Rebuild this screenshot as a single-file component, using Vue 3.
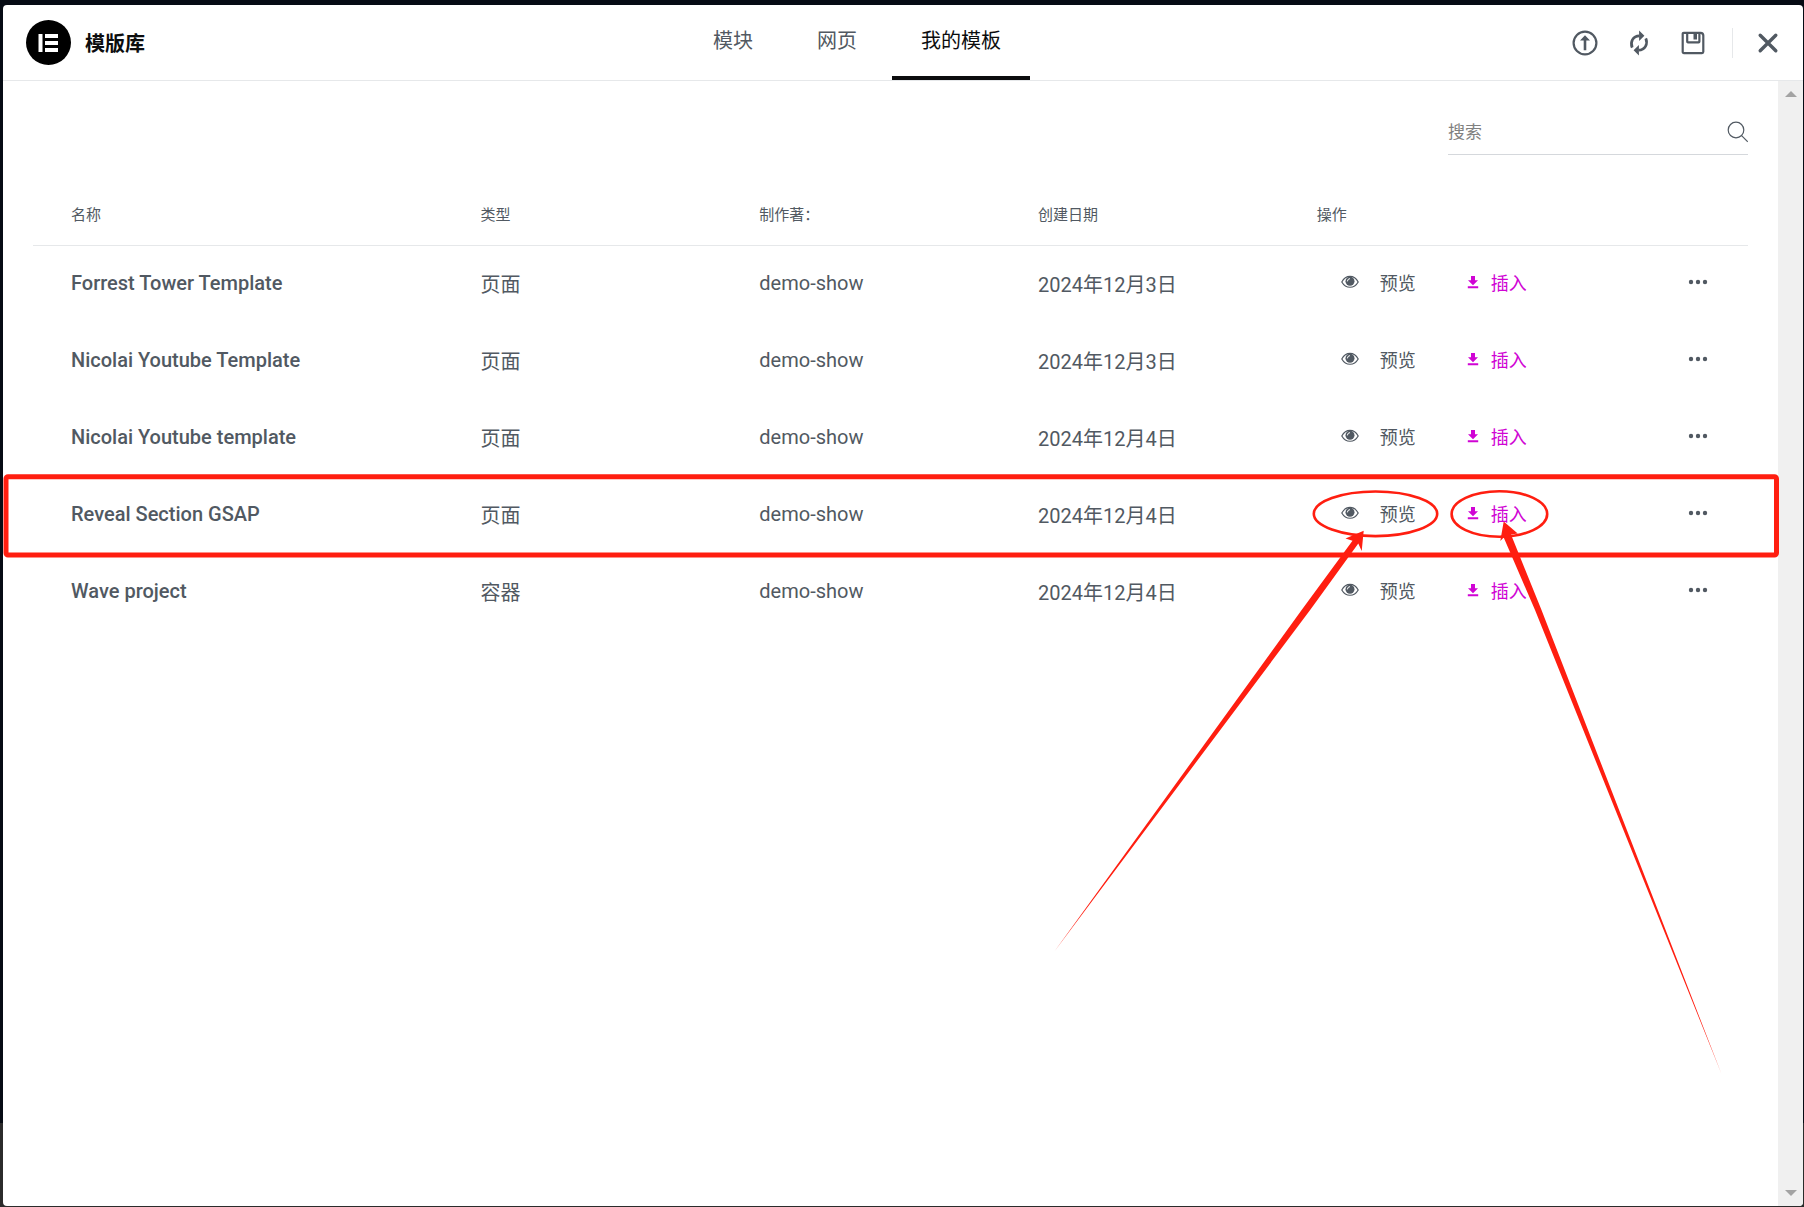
<script setup>
import { ref } from 'vue'

const tabs = ['模块', '网页', '我的模板']
const activeTab = ref('我的模板')
const search = ref('')

const templates = ref([
  { id: 1, title: 'Forrest Tower Template', type: '页面', author: 'demo-show', date: '2024年12月3日' },
  { id: 2, title: 'Nicolai Youtube Template', type: '页面', author: 'demo-show', date: '2024年12月3日' },
  { id: 3, title: 'Nicolai Youtube template', type: '页面', author: 'demo-show', date: '2024年12月4日' },
  { id: 4, title: 'Reveal Section GSAP', type: '页面', author: 'demo-show', date: '2024年12月4日' },
  { id: 5, title: 'Wave project', type: '容器', author: 'demo-show', date: '2024年12月4日' },
])
</script>

<template>
  <div class="backdrop">
    <div class="modal">
      <header class="header">
        <div class="brand">
          <svg class="logo" viewBox="0 0 45 45" aria-hidden="true">
            <circle cx="22.5" cy="22.5" r="22.5" />
            <path fill="#fff" d="M12.5 14h4v18h-4zM19 14h13v4H19zM19 21h13v4H19zM19 28h13v4H19z" />
          </svg>
          <h1>模版库</h1>
        </div>
        <nav class="tabs">
          <button
            v-for="tab in tabs"
            :key="tab"
            type="button"
            class="tab"
            :class="{ active: tab === activeTab }"
            @click="activeTab = tab"
          >
            {{ tab }}
          </button>
        </nav>
        <div class="tools">
          <button type="button" aria-label="导入模板">
            <svg width="26" height="26" viewBox="0 0 26 26">
              <circle cx="13" cy="13" r="11.4" fill="none" stroke="currentColor" stroke-width="2.2" />
              <path fill="currentColor" d="M13 5.2 18 10.4H14.3V20.2H11.7V10.4H8z" />
            </svg>
          </button>
          <button type="button" aria-label="同步模板库">
            <svg width="26" height="26" viewBox="0 0 26 26">
              <g fill="none" stroke="currentColor" stroke-width="2.7">
                <path d="M6.2 17.6C3.8 12 7 6 13.4 5.8" />
                <path d="M19.8 8.4C22.2 14 19 20 12.6 20.2" />
              </g>
              <path fill="currentColor" d="M13.1.5 18.4 5.8 13.1 11zM12.9 15 7.6 20.2 12.9 25.5z" />
            </svg>
          </button>
          <button type="button" aria-label="保存">
            <svg width="26" height="26" viewBox="0 0 26 26">
              <g fill="none" stroke="currentColor" stroke-width="2.2">
                <path d="M3.800 2.800H20.600Q23.300 2.800 23.300 5.600V21.800Q23.300 23.100 22 23.100H4Q2.700 23.100 2.700 21.800V4Q2.700 2.800 3.800 2.800z" />
                <path d="M7.200 3V11.600Q7.200 12.400 8 12.400H18.600Q19.400 12.400 19.400 11.600V3" />
              </g>
              <path fill="currentColor" d="M13.500 3h3.500v6.500h-3.500z" />
            </svg>
          </button>
          <span class="divider"></span>
          <button type="button" aria-label="关闭">
            <svg width="26" height="26" viewBox="0 0 26 26">
              <path
                d="M5.2 5.2 20.8 20.8M20.8 5.2 5.2 20.8"
                stroke="currentColor"
                stroke-width="3.4"
                stroke-linecap="round"
              />
            </svg>
          </button>
        </div>
      </header>

      <div class="body">
        <main class="content">
          <label class="search">
            <input v-model="search" type="text" placeholder="搜索" aria-label="搜索" />
            <svg width="21" height="22" viewBox="0 0 21 22" fill="none" stroke="#515962" stroke-width="1.2">
              <circle cx="9" cy="9" r="7.8" />
              <path d="M14.600 14.600 20.800 20.800" />
            </svg>
          </label>

          <table>
            <colgroup>
              <col class="col-name" />
              <col class="col-info" />
              <col class="col-info" />
              <col class="col-info" />
              <col />
            </colgroup>
            <thead>
              <tr>
                <th>名称</th>
                <th>类型</th>
                <th>制作著：</th>
                <th>创建日期</th>
                <th>操作</th>
              </tr>
            </thead>
            <tbody>
              <tr v-for="item in templates" :key="item.id">
                <td class="name">{{ item.title }}</td>
                <td>{{ item.type }}</td>
                <td>{{ item.author }}</td>
                <td>{{ item.date }}</td>
                <td>
                  <div class="actions">
                    <button type="button" class="preview">
                      <svg width="18" height="14" viewBox="0 0 18 14">
                        <path
                          d="M.8 7C4.8-.4 13.2-.4 17.2 7C13.2 14 4.8 14 .8 7z"
                          fill="none"
                          stroke="currentColor"
                          stroke-width="1.2"
                        />
                        <circle cx="9" cy="6.3" r="4.5" fill="currentColor" />
                        <path d="M6.4 6.4Q6.4 3.8 9 3.6" fill="none" stroke="#fff" stroke-width="1" />
                      </svg>
                      预览
                    </button>
                    <button type="button" class="insert">
                      <svg width="12" height="14" viewBox="0 0 12 14">
                        <path fill="currentColor" d="M4 1h4v4.200h3L6 10.200 1 5.200h3zM.8 11.300h10.400v2H.8z" />
                      </svg>
                      插入
                    </button>
                    <button type="button" class="more" aria-label="更多操作">
                      <svg width="20" height="6" viewBox="0 0 20 6" fill="currentColor">
                        <circle cx="3" cy="3" r="2.200" />
                        <circle cx="10" cy="3" r="2.200" />
                        <circle cx="17" cy="3" r="2.200" />
                      </svg>
                    </button>
                  </div>
                </td>
              </tr>
            </tbody>
          </table>
        </main>

        <div class="scrollbar" aria-hidden="true">
          <svg width="12" height="6" viewBox="0 0 12 6"><path fill="#a3a3a3" d="M0 6 6 0l6 6z" /></svg>
          <svg width="12" height="6" viewBox="0 0 12 6"><path fill="#a3a3a3" d="M0 0h12L6 6z" /></svg>
        </div>
      </div>
    </div>

    <!-- hand-drawn marks pointing at preview and insert -->
    <svg class="marks" width="1804" height="1100" viewBox="0 0 1804 1100" aria-hidden="true">
      <g fill="none" stroke="#ff1e10">
        <rect x="6" y="476.700" width="1770.500" height="78.300" rx="2" stroke-width="5" />
        <ellipse cx="1375.500" cy="513.800" rx="61.700" ry="22.300" stroke-width="2.600" />
        <ellipse cx="1499.400" cy="514" rx="47.800" ry="22.700" stroke-width="2.600" />
      </g>
      <g fill="#ff1e10">
        <path d="M1363.700 530.700 1345.500 538.500 1352.500 540.800 1302 609.500 1054 952 1310.500 609.500 1358.300 543.500 1361.700 551z" />
        <path d="M1503.700 521.500 1500.300 541 1503.700 537.500 1535 610 1721.500 1074 1541.500 610 1511 534.500 1517.700 533.500z" />
      </g>
    </svg>
  </div>
</template>

<style>
body {
  background: #2b2b2b;
}
</style>

<style scoped>
.backdrop {
  position: relative;
  display: flex;
  box-sizing: border-box;
  min-height: 100vh;
  padding: 5px 1px 1px 3px;
  background: linear-gradient(#060b14 93%, #2b2b2b 93%);
  color: #515962;
  font-family: Roboto, 'Noto Sans CJK SC', sans-serif;
}
.modal {
  flex: 1;
  display: flex;
  flex-direction: column;
  overflow: hidden;
  border-radius: 4px;
  background: #fff;
}
button {
  display: flex;
  align-items: center;
  padding: 0;
  border: 0;
  background: none;
  color: inherit;
  font: inherit;
  cursor: pointer;
}
svg {
  display: block;
}
.header {
  display: flex;
  height: 75px;
  border-bottom: 1px solid #e6e8ea;
}
.brand {
  flex: 0 0 calc(50% - 219px);
  display: flex;
  align-items: center;
  gap: 14px;
  box-sizing: border-box;
  padding-left: 23px;
}
.logo {
  width: 45px;
  height: 45px;
}
h1 {
  margin: 0;
  color: #0c0d0e;
  font-size: 20px;
  font-weight: 700;
}
.tabs {
  display: flex;
  gap: 6px;
}
.tab {
  box-sizing: border-box;
  padding: 0 29px 2px;
  border-bottom: 4px solid transparent;
  font-size: 20px;
}
.tab.active {
  border-color: #0c0d0e;
  color: #0c0d0e;
}
.tools {
  flex: 1;
  display: flex;
  align-items: center;
  justify-content: flex-end;
  gap: 28px;
  padding-right: 22px;
}
.divider {
  width: 1px;
  height: 30px;
  margin: 0 -6px 0 -2px;
  background: #e6e8ea;
}
.body {
  flex: 1;
  display: flex;
}
.content {
  flex: 1;
  padding: 30px;
}
.search {
  display: flex;
  align-items: center;
  box-sizing: border-box;
  width: 300px;
  height: 44px;
  margin-left: auto;
  padding-bottom: 2px;
  border-bottom: 1px solid #d5d8dc;
}
.search input {
  flex: 1;
  min-width: 0;
  padding: 0;
  border: 0;
  outline: 0;
  background: none;
  color: #515962;
  font: inherit;
  font-size: 17px;
}
.search input::placeholder {
  color: #818181;
}
table {
  width: 100%;
  margin-top: 30px;
  border-collapse: collapse;
  table-layout: fixed;
}
.col-name {
  width: 26.1%;
}
.col-info {
  width: 16.25%;
}
th,
td {
  padding: 0 0 3px;
  text-align: left;
  font-weight: 400;
}
th:first-child,
td:first-child {
  padding-left: 38px;
}
th {
  height: 57px;
  border-bottom: 1px solid #e6e8ea;
  font-size: 15px;
}
td {
  height: 74px;
  font-size: 20px;
}
td.name {
  font-weight: 500;
}
.actions {
  display: flex;
  align-items: center;
  padding: 0 40px 2px 24px;
  font-size: 18px;
}
.preview {
  gap: 21px;
}
.insert {
  gap: 12px;
  margin-left: 51px;
  color: #d004d4;
}
.more {
  margin-left: auto;
}
.scrollbar {
  display: flex;
  flex-direction: column;
  align-items: center;
  justify-content: space-between;
  width: 25px;
  padding: 10px 0;
  background: #f0f0f0;
}
.marks {
  position: absolute;
  top: 0;
  left: 0;
  pointer-events: none;
}
</style>
